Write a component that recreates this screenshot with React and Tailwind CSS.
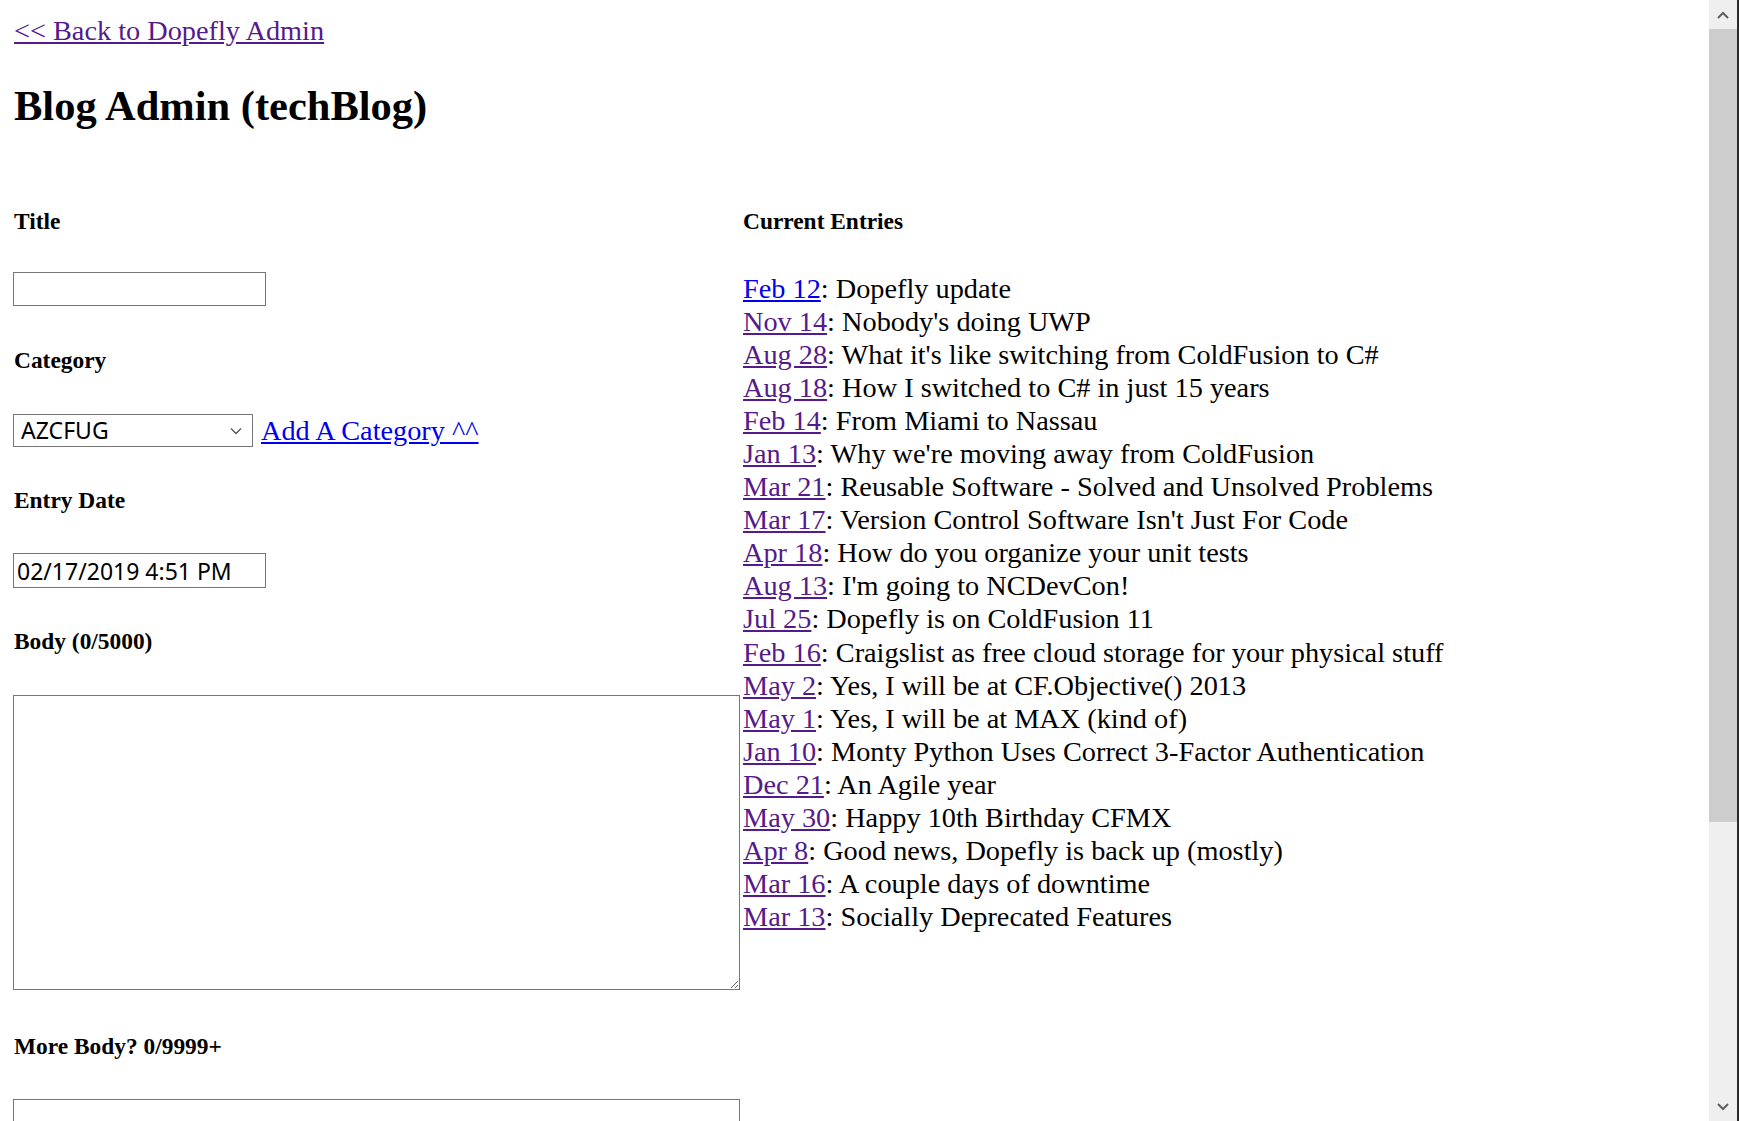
import React from "react";

const entries = [
  ["Feb 12", "Dopefly update", false],
  ["Nov 14", "Nobody's doing UWP", true],
  ["Aug 28", "What it's like switching from ColdFusion to C#", true],
  ["Aug 18", "How I switched to C# in just 15 years", true],
  ["Feb 14", "From Miami to Nassau", true],
  ["Jan 13", "Why we're moving away from ColdFusion", true],
  ["Mar 21", "Reusable Software - Solved and Unsolved Problems", true],
  ["Mar 17", "Version Control Software Isn't Just For Code", true],
  ["Apr 18", "How do you organize your unit tests", true],
  ["Aug 13", "I'm going to NCDevCon!", true],
  ["Jul 25", "Dopefly is on ColdFusion 11", true],
  ["Feb 16", "Craigslist as free cloud storage for your physical stuff", true],
  ["May 2", "Yes, I will be at CF.Objective() 2013", true],
  ["May 1", "Yes, I will be at MAX (kind of)", true],
  ["Jan 10", "Monty Python Uses Correct 3-Factor Authentication", true],
  ["Dec 21", "An Agile year", true],
  ["May 30", "Happy 10th Birthday CFMX", true],
  ["Apr 8", "Good news, Dopefly is back up (mostly)", true],
  ["Mar 16", "A couple days of downtime", true],
  ["Mar 13", "Socially Deprecated Features", true],
];

const serif = "font-['Liberation_Serif','Times_New_Roman',serif]";
const sans = "font-['Noto_Sans','Segoe_UI',sans-serif]";

function Label({ children, className = "" }) {
  return (
    <div className={`text-[23.4px] font-bold leading-[28px] text-black ${className}`}>
      {children}
    </div>
  );
}

function Scrollbar() {
  return (
    <div className="flex h-full w-[30px] shrink-0 border-r-2 border-[#2b2b2b]">
      <div className="flex h-full w-[28px] flex-col bg-[#efefef]">
        <div className="flex h-[29px] items-center justify-center">
          <svg width="12" height="8" viewBox="0 0 12 8">
            <path d="M1 7 L6 2 L11 7" fill="none" stroke="#606060" strokeWidth="2" />
          </svg>
        </div>
        <div className="h-[793px] bg-[#cdcdcd]" />
        <div className="flex-1" />
        <div className="flex h-[29px] items-center justify-center">
          <svg width="12" height="8" viewBox="0 0 12 8">
            <path d="M1 1 L6 6 L11 1" fill="none" stroke="#606060" strokeWidth="2" />
          </svg>
        </div>
      </div>
    </div>
  );
}

export default function App() {
  return (
    <div className={`flex h-[1121px] w-[1739px] overflow-hidden bg-white ${serif}`}>
      <div className="flex-1 overflow-hidden pl-[13px]">
        {/* back link */}
        <div className="mt-[14px] pl-px text-[28.3px] leading-[33px]">
          <a href="#" className="text-[#551a8b] underline">
            &lt;&lt; Back to Dopefly Admin
          </a>
        </div>

        <h2 className="mt-[34px] pl-px text-[42.5px] font-bold leading-[50px] text-black">
          Blog Admin (techBlog)
        </h2>

        <div className="mt-[76px] flex">
          {/* form */}
          <div className="w-[730px] shrink-0">
            <Label className="pl-px">Title</Label>
            <input
              type="text"
              className={`mt-[37px] block h-[34px] w-[253px] border border-[#767676] px-[3px] text-[23px] ${sans}`}
            />

            <Label className="mt-[40px] pl-px">Category</Label>
            <div className="mt-[40px] flex items-center">
              <div
                className={`flex h-[33px] w-[240px] items-center justify-between border border-[#767676] pl-[7px] pr-[10px] text-[23px] text-black ${sans}`}
              >
                <span>AZCFUG</span>
                <svg width="12" height="8" viewBox="0 0 12 8">
                  <path d="M1 1.5 L6 6.5 L11 1.5" fill="none" stroke="#555" strokeWidth="1.3" />
                </svg>
              </div>
              <a href="#" className="ml-[8px] text-[28.3px] leading-[33px] text-[#0000ee] underline">
                Add A Category ^^
              </a>
            </div>

            <Label className="mt-[39px] pl-px">Entry Date</Label>
            <input
              type="text"
              defaultValue="02/17/2019 4:51 PM"
              className={`mt-[39px] block h-[35px] w-[253px] border border-[#767676] px-[3px] text-[23px] text-black ${sans}`}
            />

            <Label className="mt-[39px] pl-px">Body (0/5000)</Label>
            <textarea className="mt-[40px] block h-[295px] w-[727px] border border-[#767676]" />

            <Label className="mt-[42px] pl-px">More Body? 0/9999+</Label>
            <textarea className="mt-[39px] block h-[295px] w-[727px] border border-[#767676]" />
          </div>

          {/* entries */}
          <div className="flex-1">
            <Label>Current Entries</Label>
            <div className="mt-[37px] text-[28.3px] leading-[33.05px] text-black">
              {entries.map(([date, title, visited]) => (
                <div key={date + title}>
                  <a
                    href="#"
                    className={`underline ${visited ? "text-[#551a8b]" : "text-[#0000ee]"}`}
                  >
                    {date}
                  </a>
                  : {title}
                </div>
              ))}
            </div>
          </div>
        </div>
      </div>
      <Scrollbar />
    </div>
  );
}
